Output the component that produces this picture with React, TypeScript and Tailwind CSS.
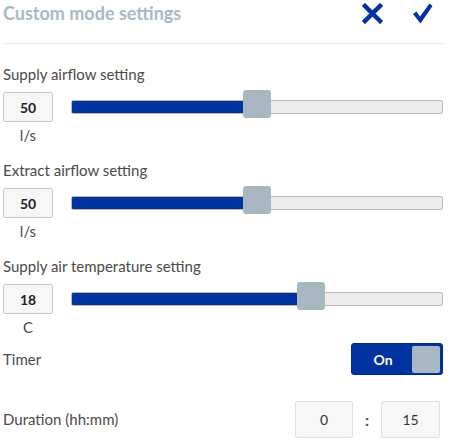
import React from "react";

const font = { fontFamily: "Lato, 'Open Sans', sans-serif" };

function Slider({ percent }: { percent: number }) {
  const p = percent / 100;
  return (
    <div className="relative flex-1 h-[30px] flex items-center">
      <div className="relative w-full h-[14px] rounded-[2px] border border-[#b9b9b9] bg-[#ececec] overflow-hidden">
        <div
          className="absolute left-0 top-0 h-full bg-[#0033a0]"
          style={{ width: `calc((100% - 28px) * ${p} + 14px)` }}
        />
      </div>
      <div
        className="absolute top-[-2px] w-[28px] h-[28px] rounded-[3px] bg-[#a7b8c3]"
        style={{ left: `calc((100% - 28px) * ${p})` }}
      />
    </div>
  );
}

function SliderSection({
  label,
  value,
  unit,
  percent,
  first,
}: {
  label: string;
  value: string;
  unit: string;
  percent: number;
  first?: boolean;
}) {
  return (
    <div className={first ? "pt-[20px]" : "pt-[15px]"}>
      <div className="text-[15px] leading-[20px] text-[#4a4a4a]">{label}</div>
      <div className="flex items-start mt-[8px]">
        <div className="w-[50px] flex flex-col items-center">
          <div className="w-[50px] h-[30px] border border-[#c6c6c6] rounded-[2px] bg-[#f7f7f7] flex items-center justify-center text-[14px] font-bold text-[#222]">
            {value}
          </div>
          <div className="text-[15px] leading-[20px] mt-[3px] text-[#4a4a4a]">{unit}</div>
        </div>
        <div className="ml-[18px] flex-1 flex">
          <Slider percent={percent} />
        </div>
      </div>
    </div>
  );
}

export default function App() {
  return (
    <div className="w-[454px] h-[447px] bg-white pl-[3px] pr-[11px]" style={font}>
      <div className="h-[44px] flex items-center justify-between border-b border-[#e6e6e6]">
        <div className="text-[18px] font-bold text-[#a8b9c5] -mt-[16px]">Custom mode settings</div>
        <div className="flex items-center gap-[29px] pr-[10px] -mt-[16px]">
          <svg width="21" height="21" viewBox="0 0 21 21">
            <path d="M3 3 L18 18 M18 3 L3 18" stroke="#0033a0" strokeWidth="4.5" strokeLinecap="square" />
          </svg>
          <svg width="21" height="21" viewBox="0 0 21 21">
            <path d="M1 11 L4.5 8.5 L8 13.5 L17.5 0.5 L20.5 3 L8.5 20.5 Z" fill="#0033a0" />
          </svg>
        </div>
      </div>
      <SliderSection first label="Supply airflow setting" value="50" unit="l/s" percent={50} />
      <SliderSection label="Extract airflow setting" value="50" unit="l/s" percent={50} />
      <SliderSection label="Supply air temperature setting" value="18" unit="C" percent={65.8} />
      <div className="flex items-center justify-between mt-[6px]">
        <div className="text-[15px] text-[#4a4a4a]">Timer</div>
        <div className="w-[92px] h-[32px] rounded-[3px] bg-[#0033a0] border border-[#002a85] flex items-center p-[2px]">
          <div className="flex-1 text-center text-white font-bold text-[14px]">On</div>
          <div className="w-[28px] h-[27px] rounded-[2px] bg-[#a7b8c3]" />
        </div>
      </div>
      <div className="flex items-center justify-between mt-[26px]">
        <div className="text-[15px] text-[#4a4a4a]">Duration (hh:mm)</div>
        <div className="flex items-center pr-[3px]">
          <div className="w-[58px] h-[37px] border border-[#e0e0e0] rounded-[2px] bg-[#f7f7f7] flex items-center justify-center text-[14px] text-[#333]">
            0
          </div>
          <div className="w-[28px] text-center font-bold text-[16px] text-[#555]">:</div>
          <div className="w-[59px] h-[37px] border border-[#e0e0e0] rounded-[2px] bg-[#f7f7f7] flex items-center justify-center text-[14px] text-[#333]">
            15
          </div>
        </div>
      </div>
    </div>
  );
}
